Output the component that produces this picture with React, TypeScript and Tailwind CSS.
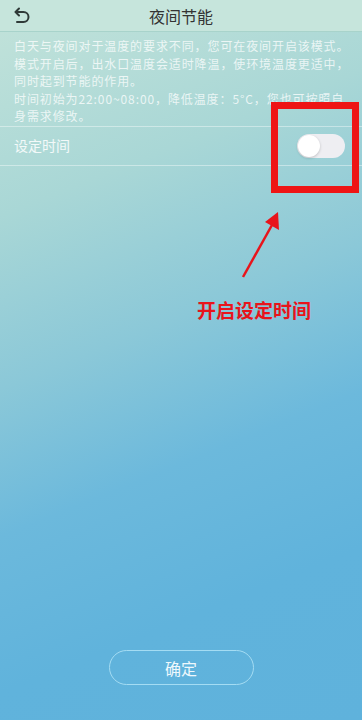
import { useState } from "react";

const font = "font-['Noto_Sans_CJK_SC','Noto_Sans',sans-serif]";

const BackIcon = () => (
  <svg width="20" height="20" viewBox="0 0 20 20" fill="none" stroke="#2f3a38" strokeWidth="2" strokeLinecap="round" strokeLinejoin="round">
    <path d="M7 2.5 L3.5 6 L7 9.5" />
    <path d="M3.8 6 H11.5 a5 5 0 0 1 0 10 H5" />
  </svg>
);

const lines = [
  "白天与夜间对于温度的要求不同，您可在夜间开启该模式。",
  "模式开启后，出水口温度会适时降温，使环境温度更适中，",
  "同时起到节能的作用。",
  "时间初始为22:00~08:00，降低温度：5°C，您也可按照自",
  "身需求修改。",
];

const App = () => {
  const [on, setOn] = useState(false);

  return (
    <div className={`relative h-[720px] w-[362px] overflow-hidden ${font} bg-[linear-gradient(158deg,#c3e3da_0%,#a9d7d6_25%,#8bc8d8_45%,#6cb9dc_62%,#60b3dc_80%,#5fb2dc_100%)]`}>
      <div className="flex h-[32px] items-center border-b border-[#a8d3cb] bg-[#c6e5dc] px-3">
        <BackIcon />
        <div className="flex-1 pr-5 text-center text-[16px] text-[#333]">夜间节能</div>
      </div>

      <div className="px-[14px] pt-[5px] pb-[1px] text-[12px] leading-[17.5px] tracking-[0.9px] text-white/75">
        {lines.map((l, i) => (
          <div key={i} className="whitespace-nowrap">{l}</div>
        ))}
      </div>

      <div className="flex h-[40px] items-center justify-between border-y border-white/40 pl-[14px] pr-[17px]">
        <span className="text-[14px] text-white/85">设定时间</span>
        <button
          onClick={() => setOn(!on)}
          className={`flex h-[24px] w-[48px] items-center rounded-full px-[1px] ${on ? "justify-end bg-[#4cd964]" : "justify-start bg-[#eeeef2]"}`}
        >
          <span className="h-[22px] w-[22px] rounded-full bg-white shadow-[0_1px_3px_rgba(0,0,0,0.2)]" />
        </button>
      </div>

      <div className="absolute bottom-[35px] left-0 right-0 flex justify-center">
        <button className="h-[35px] w-[145px] rounded-full border-[1.5px] border-[#a4dcf3] text-[16px] text-[#eef8fc]">
          确定
        </button>
      </div>

      {/* annotation overlay */}
      <div className="pointer-events-none absolute left-[271px] top-[102px] h-[91px] w-[88px] border-[7px] border-[#ee1515]" />
      <svg className="pointer-events-none absolute left-0 top-0" width="362" height="720">
        <line x1="243" y1="277" x2="272" y2="225" stroke="#e8141b" strokeWidth="2.5" />
        <polygon points="278,212 265,222 279,230" fill="#e8141b" />
      </svg>
      <div className="pointer-events-none absolute left-[197px] top-[298px] text-[19px] font-bold leading-[24px] text-[#e8141b]">
        开启设定时间
      </div>
    </div>
  );
};

export default App;
